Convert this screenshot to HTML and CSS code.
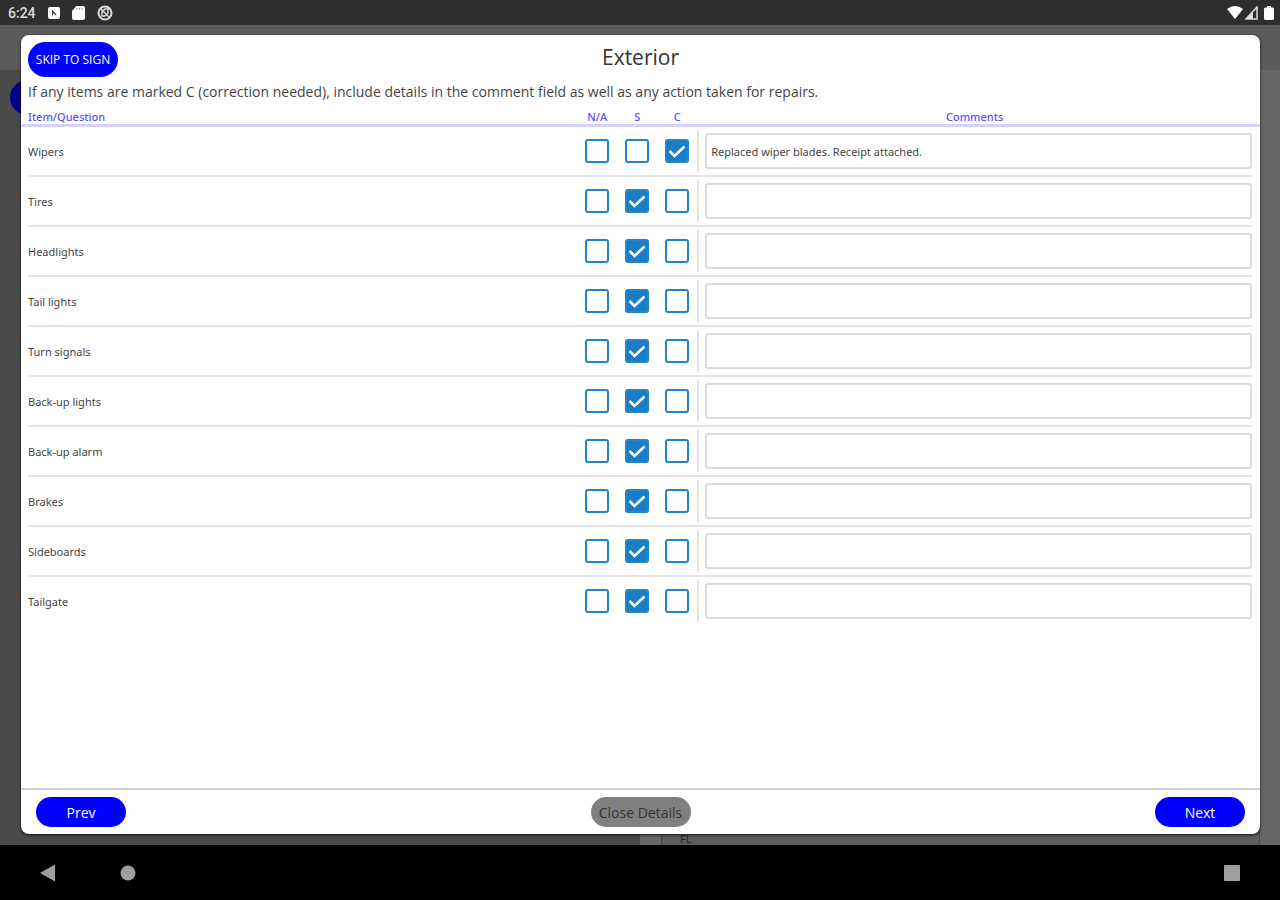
FILE: index.html
```
<!DOCTYPE html>
<html lang="en">
<head>
    <meta charset="UTF-8">
    <meta name="viewport" content="width=device-width, initial-scale=1">
    <title>Exterior</title>
    <link rel="stylesheet" href="styles.css">
</head>
<body>
    <header class="status-bar">
        <span class="clock">6:24</span>
        <svg width="12" height="12" viewBox="0 0 12 12"><rect width="12" height="12" rx="2" fill="#fff"/><path d="M4.500 8.500V4L8 8M4.500 6h2" stroke="#444" stroke-width="1.200" fill="none"/></svg>
        <svg width="13" height="14" viewBox="0 0 13 14"><path d="M4.500 0H11q2 0 2 2v10q0 2-2 2H2q-2 0-2-2V5z" fill="#fff"/><path d="M5 2v2M7.500 2v2M10 2v2" stroke="#999"/></svg>
        <svg width="16" height="16" viewBox="0 0 16 16" fill="none" stroke="#ddd" stroke-width="2"><circle cx="8" cy="8" r="6.500"/><path d="M3.500 3.500l9 9M5 11V7l3-3h3v4l-3 3z" stroke-width="1.500"/></svg>
        <svg class="wifi" width="16" height="13" viewBox="0 0 16 13"><path d="M0 3Q8-3 16 3L8 13z" fill="#fff"/></svg>
        <svg width="13" height="14" viewBox="0 0 13 14"><path d="M1 13L12 1v12z" fill="none" stroke="#ddd" stroke-width="1.500"/><path d="M1 13l7-7v7z" fill="#ddd"/></svg>
        <svg class="battery" width="10" height="14" viewBox="0 0 10 14"><path d="M3 0h4v1.500h1.500Q10 1.500 10 3v9.500q0 1.500-1.500 1.500h-7Q0 14 0 12.500V3q0-1.500 1.500-1.500H3z" fill="#fff"/></svg>
    </header>

    <main class="screen">
        <!-- dimmed page behind the dialog -->
        <div class="behind">
            <div class="toolbar"></div>
            <div class="panes">
                <div class="pane-left"><span class="dot"></span></div>
                <div class="pane-mark"></div>
                <div class="pane-right">FL</div>
                <div class="pane-edge"></div>
            </div>
        </div>

        <form class="dialog">
            <div class="top">
                <button type="button" class="btn skip">SKIP TO SIGN</button>
                <h1>Exterior</h1>
            </div>
            <p class="hint">If any items are marked C (correction needed), include details in the comment field as well as any action taken for repairs.</p>
            <table>
                <thead>
                    <tr>
                        <th class="item">Item/Question</th>
                        <th>N/A</th>
                        <th>S</th>
                        <th>C</th>
                        <th>Comments</th>
                    </tr>
                </thead>
                <tbody id="rows"></tbody>
            </table>
            <div class="footer">
                <button type="button" class="btn">Prev</button>
                <button type="button" class="btn close" disabled>Close Details</button>
                <button type="button" class="btn">Next</button>
            </div>
        </form>
    </main>

    <nav class="nav-bar">
        <button type="button" aria-label="Back"><svg width="16" height="18" viewBox="0 0 16 18"><path d="M0 9L15 0.500v17z" fill="#9e9e9e"/></svg></button>
        <button type="button" aria-label="Home"><svg width="16" height="16" viewBox="0 0 16 16"><circle cx="8" cy="8" r="7.500" fill="#9e9e9e"/></svg></button>
        <button type="button" class="recent" aria-label="Recent apps"><svg width="16" height="16" viewBox="0 0 16 16"><rect width="16" height="16" rx="1" fill="#9e9e9e"/></svg></button>
    </nav>

    <script>
        var items = [
            ['Wipers', 'C', 'Replaced wiper blades. Receipt attached.'],
            ['Tires', 'S', ''],
            ['Headlights', 'S', ''],
            ['Tail lights', 'S', ''],
            ['Turn signals', 'S', ''],
            ['Back-up lights', 'S', ''],
            ['Back-up alarm', 'S', ''],
            ['Brakes', 'S', ''],
            ['Sideboards', 'S', ''],
            ['Tailgate', 'S', '']
        ];
        var html = '';
        items.forEach(function(item){
            html += '<tr><td class="item">' + item[0] + '</td>';
            ['N/A', 'S', 'C'].forEach(function(mark){
                html += '<td class="mark"><input type="checkbox" aria-label="' + item[0] + ' ' + mark + '"' + (mark == item[1] ? ' checked' : '') + '></td>';
            });
            html += '<td class="comment"><input type="text" aria-label="' + item[0] + ' comments" value="' + item[2] + '"></td></tr>';
        });
        document.getElementById('rows').innerHTML = html;
    </script>
</body>
</html>
```
FILE: styles.css
```
*{
    box-sizing: border-box;
}
body{
    margin: 0;
    min-height: 100vh;
    display: flex;
    flex-direction: column;
    background-color: #000;
    font-family: "Open Sans", sans-serif;
    color: #444;
}
.status-bar{
    height: 25px;
    padding: 0 6px 0 8px;
    display: flex;
    align-items: center;
    gap: 12px;
    background-color: #2e2e2e;
    color: #ddd;
}
.clock{
    font-family: Roboto, sans-serif;
    font-size: 14px;
    font-weight: 500;
}
.wifi{
    margin-left: auto;
}
.wifi + svg{
    margin-left: -10px;
}
.battery{
    margin-left: -6px;
}
.screen{
    flex: 1;
    position: relative;
    display: flex;
    padding: 10px 20px 11px 21px;
}
.behind{
    position: absolute;
    inset: 0;
    display: flex;
    flex-direction: column;
}
.toolbar{
    height: 45px;
    background-color: #5b5b5b;
}
.panes{
    flex: 1;
    display: flex;
}
.pane-left{
    width: 50%;
    position: relative;
    background-color: #4a4a4a;
}
.dot{
    position: absolute;
    left: 10px;
    top: 10px;
    width: 35px;
    height: 35px;
    border-radius: 50%;
    background-color: #00008b;
}
.pane-mark{
    width: 22px;
    border-right: 1px solid #444;
    background-color: #686868;
}
.pane-right{
    flex: 1;
    display: flex;
    align-items: flex-end;
    padding-left: 18px;
    background-color: #5c5c5c;
    color: #222;
    font-size: 11px;
    line-height: 12px;
}
.pane-edge{
    width: 21px;
    border-left: 1px solid #484848;
    background-color: #666;
}
.dialog{
    flex: 1;
    position: relative;
    display: flex;
    flex-direction: column;
    border-radius: 8px;
    background-color: #fff;
    box-shadow: 0 1px 3px #111;
}
.top{
    display: grid;
    grid-template-columns: 1fr auto 1fr;
    padding: 7px 7px 0;
}
h1{
    margin: 0;
    font-size: 21px;
    font-weight: 400;
    line-height: 30px;
    color: #333;
}
.btn{
    width: 90px;
    height: 30px;
    padding: 0;
    border: none;
    border-radius: 18px;
    background-color: #0000ff;
    color: #fff;
    font-family: inherit;
    font-size: 14px;
}
.skip{
    height: 35px;
    font-size: 12px;
}
.hint{
    margin: 0;
    padding: 5px 7px 3px;
    font-size: 14px;
    line-height: 20px;
}
table{
    display: block;
    font-family: "Noto Sans", sans-serif;
    font-size: 11px;
}
thead, tbody{
    display: block;
    padding: 0 8px 0 7px;
}
thead{
    border-bottom: 3px solid #d6d3fb;
    color: #5a50ff;
}
tr{
    display: grid;
    grid-template-columns: 99fr 40px 40px 40px 100fr;
}
th{
    padding: 4px 0 0;
    font-weight: 500;
    line-height: 15px;
}
.item{
    text-align: left;
}
tbody tr{
    height: 50px;
    align-items: center;
    border-bottom: 2px solid #e2e2e2;
}
tbody tr:last-child{
    border-bottom-color: transparent;
}
td{
    padding: 0;
}
.mark{
    display: flex;
    justify-content: center;
}
input[type=checkbox]{
    appearance: none;
    width: 24px;
    height: 24px;
    margin: 0;
    border: 2px solid #2583c8;
    border-radius: 3px;
}
input[type=checkbox]:checked{
    background: #1a7dc8 url("data:image/svg+xml,%3Csvg xmlns='http://www.w3.org/2000/svg' viewBox='0 0 20 20'%3E%3Cpath d='M2.5 10l5 5L17.500 5.500' fill='none' stroke='white' stroke-width='2.500'/%3E%3C/svg%3E");
}
.comment{
    height: 42px;
    padding: 3px 0 3px 6px;
    border-left: 2px solid #e2e2e2;
}
input[type=text]{
    width: 100%;
    height: 36px;
    padding: 0 4px;
    border: 2px solid #dcdcdc;
    border-radius: 3px;
    font-family: inherit;
    font-size: 11px;
    color: #444;
}
.footer{
    margin-top: auto;
    padding: 7px 15px;
    display: flex;
    justify-content: space-between;
    border-top: 2px solid #cfcfcf;
}
.close{
    width: 100px;
    background-color: #808080;
    color: #333;
}
.nav-bar{
    height: 55px;
    padding: 0 40px;
    display: flex;
    align-items: center;
    gap: 64px;
}
.nav-bar button{
    display: flex;
    padding: 0;
    border: none;
    background: none;
}
.nav-bar .recent{
    margin-left: auto;
}
```
